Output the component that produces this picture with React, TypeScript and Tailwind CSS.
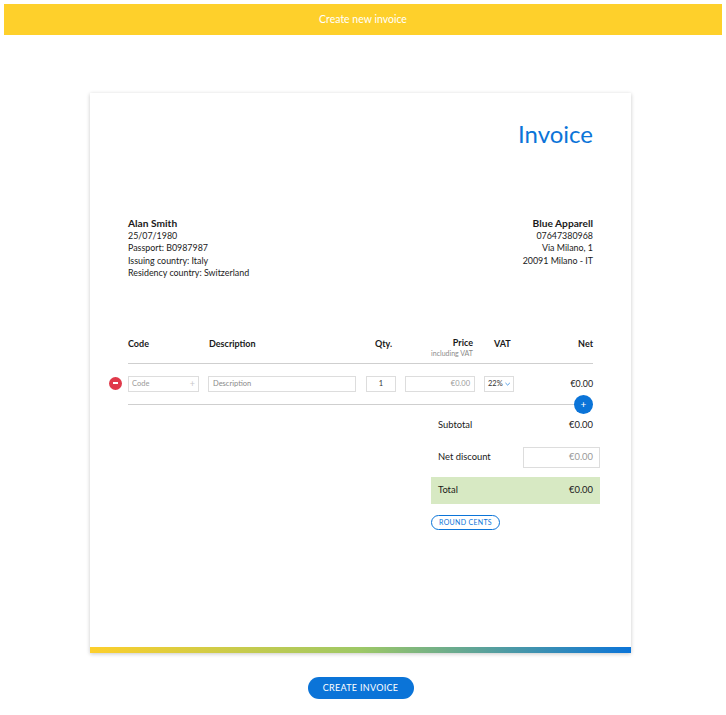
import React from "react";

const font = { fontFamily: "Lato, 'Open Sans', sans-serif" };

export default function App() {
  return (
    <div className="min-h-[715px] bg-white text-[#1a1a1a]" style={font}>
      <div className="px-[4px] pt-[4px]">
        <div className="h-[31px] bg-[#fed02b] flex items-center justify-center text-white text-[10.5px]">
          Create new invoice
        </div>
      </div>

      <div className="ml-[90px] w-[541px] mt-[58px]">
        <div className="bg-white shadow-[0_1px_4px_rgba(0,0,0,0.22)] flex flex-col">
          <div className="px-[38px] pt-[25px] h-[554px]">
            <div className="text-right text-[24px] leading-[32px] text-[#0b74d8]">Invoice</div>

            <div className="mt-[67px] flex justify-between text-[8.9px] leading-[12.5px]">
              <div>
                <div className="font-bold text-[10.2px]">Alan Smith</div>
                <div>25/07/1980</div>
                <div>Passport: B0987987</div>
                <div>Issuing country: Italy</div>
                <div>Residency country: Switzerland</div>
              </div>
              <div className="text-right">
                <div className="font-bold text-[10.2px]">Blue Apparell</div>
                <div>07647380968</div>
                <div>Via Milano, 1</div>
                <div>20091 Milano - IT</div>
              </div>
            </div>

            <div className="mt-[56px] flex text-[9px] font-bold h-[28px] border-b border-[#cfcfcf]">
              <div className="w-[81px] pt-[1px]">Code</div>
              <div className="flex-1 pt-[1px]">Description</div>
              <div className="w-[28px] pt-[1px]">Qty.</div>
              <div className="w-[70px] text-right leading-[12px] pt-[1px]">
                <div>Price</div>
                <div className="text-[7px] font-normal text-[#8a8a8a] leading-[9px]">including VAT</div>
              </div>
              <div className="w-[39px] pl-[21px] pt-[1px]">VAT</div>
              <div className="w-[81px] text-right pt-[1px]">Net</div>
            </div>

            <div className="relative flex items-center h-[41px] border-b border-[#cfcfcf] text-[7.5px]">
              <div className="absolute left-[-19px] top-[13px] w-[13px] h-[13px] rounded-full bg-[#e0394a] flex items-center justify-center">
                <div className="w-[5px] h-[1.3px] bg-white" />
              </div>
              <div className="w-[71px] h-[16px] border border-[#dddddd] flex items-center justify-between px-[3px] text-[#9a9a9a]">
                <span>Code</span>
                <span className="text-[#c8c8c8] text-[9px]">+</span>
              </div>
              <div className="ml-[9px] w-[148px] h-[16px] border border-[#dddddd] flex items-center px-[4px] text-[#8a8a8a]">
                Description
              </div>
              <div className="ml-[10px] w-[30px] h-[16px] border border-[#dddddd] flex items-center justify-center text-[#333]">
                1
              </div>
              <div className="ml-[9px] w-[70px] h-[16px] border border-[#dddddd] flex items-center justify-end px-[4px] text-[#9a9a9a]">
                €0.00
              </div>
              <div className="ml-[9px] w-[30px] h-[16px] border border-[#dddddd] flex items-center px-[3px] gap-[2px] text-[#333]">
                <span>22%</span>
                <svg width="6" height="4" viewBox="0 0 6 4" fill="none" stroke="#0b74d8" strokeWidth="0.8">
                  <path d="M0.5 0.8 L3 3.2 L5.5 0.8" />
                </svg>
              </div>
              <div className="flex-1 text-right text-[8.8px] text-[#1a1a1a]">€0.00</div>
              <div className="absolute right-0 bottom-[-10px] w-[19px] h-[19px] rounded-full bg-[#0b74d8] flex items-center justify-center text-white text-[10px] leading-none">
                +
              </div>
            </div>

            <div className="ml-[303px] mr-[-7px] text-[9.4px]">
              <div className="flex justify-between items-center h-[22px] mt-[10px] pl-[7px] pr-[7px]">
                <span>Subtotal</span>
                <span>€0.00</span>
              </div>
              <div className="flex justify-between items-center h-[21px] mt-[10px] pl-[7px]">
                <span>Net discount</span>
                <div className="w-[77px] h-[21px] border border-[#dddddd] flex items-center justify-end px-[6px] text-[#999]">
                  €0.00
                </div>
              </div>
              <div className="flex justify-between items-center h-[27px] mt-[9px] px-[7px] bg-[#d7e9c3]">
                <span>Total</span>
                <span>€0.00</span>
              </div>
              <div className="mt-[11px]">
                <div className="inline-flex items-center justify-center w-[69px] h-[15px] rounded-full border border-[#0b74d8] text-[#0b74d8] text-[7px] tracking-[0.3px]">
                  ROUND CENTS
                </div>
              </div>
            </div>
          </div>
          <div className="h-[6px] bg-[linear-gradient(to_right,#fdcf2b,#9dc866_50%,#0b74d8)]" />
        </div>

        <div className="flex justify-center mt-[24px]">
          <div className="w-[106px] h-[22px] rounded-full bg-[#0b74d8] text-white text-[9px] flex items-center justify-center tracking-[0.3px]">
            CREATE INVOICE
          </div>
        </div>
      </div>
    </div>
  );
}
